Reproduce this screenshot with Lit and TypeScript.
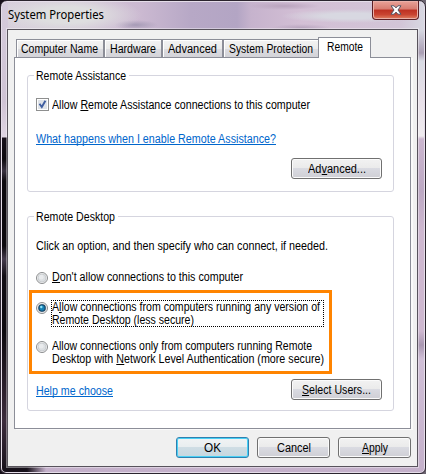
import { LitElement, html, css, svg } from "lit";
import { customElement, property } from "lit/decorators.js";

/** A single line of text fitted to a given width. "&" marks the access key. */
@customElement("fit-text")
class FitText extends LitElement {
  @property() text = "";
  @property({ type: Number }) w = 0;
  static styles = css`
    :host { display: block; flex: none; height: 14px; line-height: 14px; white-space: nowrap; }
    .line { display: inline-block; transform-origin: 0 0; }
    .key { display: inline-block; height: 13px; vertical-align: top; border-bottom: 1px solid currentColor; line-height: 14px; box-sizing: border-box; }
  `;
  updated() {
    const el = this.renderRoot.querySelector(".line") as HTMLElement;
    this.style.width = this.w + "px";
    const n = el.getBoundingClientRect().width;
    if (n) el.style.transform = `scaleX(${this.w / n})`;
  }
  render() {
    const i = this.text.indexOf("&");
    return i < 0
      ? html`<span class="line">${this.text}</span>`
      : html`<span class="line">${this.text.slice(0, i)}<span class="key">${this.text[i + 1]}</span>${this.text.slice(i + 2)}</span>`;
  }
}

const t = (text: string, w: number, cls = "") => html`<fit-text class=${cls} .text=${text} .w=${w}></fit-text>`;

const radio = (on: boolean) => html`<svg class="radio" viewBox="0 0 12 12">
  <circle cx="6" cy="6" r="5.5" fill="#f6f6f6" stroke="#8a8c8e"/>
  <circle cx="6" cy="6" r="4" fill="#dcdfe2" stroke="#c4c8cc" stroke-width=".8"/>
  ${on
    ? svg`<circle cx="6" cy="6" r="3.2" fill="#1580b4" stroke="#123e60" stroke-width="1.1"/><circle cx="5.3" cy="5" r="1.2" fill="#8fe2f8"/>`
    : svg`<circle cx="5.2" cy="5.2" r="2.4" fill="#e9ebed"/>`}
</svg>`;

@customElement("app-root")
class AppRoot extends LitElement {
  static styles = css`
    :host { display: block; width: 426px; height: 474px; background: linear-gradient(90deg, #17101a 60%, #6d6672); overflow: hidden; font: 12px "Liberation Sans", sans-serif; color: #000; }
    * { box-sizing: border-box; }
    .window { position: relative; height: 474px; border: 1px solid #2b242e; border-radius: 7px 7px 6px 6px; padding: 28px 7px 7px 6px; box-shadow: inset 0 0 0 1px #e5dde9;
      background:
        linear-gradient(90deg, #17101a 25px, transparent 44px) 1px 465px / 60px 7px no-repeat,
        linear-gradient(#d5cbdc 0, #cfc3d4 100px, #dfd5e2 136px, #17101a 137px, #0d090e 158px, #3a3240 170px, #0d090e 180px, #0d090e 245px, #453b4c 258px, #120d14 275px, #0d090e 330px, #3c2c3c 420px, #17101a 470px) 1px 0 / 6px 471px no-repeat,
        radial-gradient(ellipse 75px 20px at 66px 14px, #dededf 40%, transparent) 0 0 / 160px 28px no-repeat,
        radial-gradient(ellipse 22px 5px at 135px 24px, #a69bb6, transparent) 0 0 / 200px 29px no-repeat,
        radial-gradient(ellipse 36px 4px at 283px 5px, #b9a3bd, transparent) 0 0 / 426px 29px no-repeat,
        radial-gradient(ellipse 30px 4px at 300px 27px, #b7a4be, transparent) 0 0 / 426px 29px no-repeat,
        radial-gradient(ellipse 70px 7px at 350px 15px, #d8d8e1 40%, transparent) 0 0 / 426px 29px no-repeat,
        linear-gradient(90deg, #d8d0dc 0, #d3c3d8 80px, #cbb9d1 140px, #b7a8c6 190px, #b3a5c4 236px, #c6b3cd 250px, #d3bfd5 300px, #d2c5d7 400px, #d8dae3 426px) 0 0 / 426px 29px no-repeat,
        linear-gradient(#d8dae3 28px, #a99db3 52px, #d8dae3 60px, #e8e0e9 100px, #efebef 135px, #cbb6cf 138px, #bda9c4 190px, #ceb8d0 230px, #ceb8d0 330px, #a997b1 344px, #d0bfd7 358px, #c4b0ca 474px); }
    .title { position: absolute; left: 7px; top: 7px; font: 12px/14px "Noto Sans", sans-serif; }
    .close { position: absolute; left: 371px; top: 0; width: 47px; height: 19px; border: 1px solid #5e2025; border-top: 0; border-radius: 0 0 4px 4px; box-shadow: inset 0 0 0 1px #eab0a8; background: linear-gradient(#e9a399, #d77c70 45%, #bd3022 50%, #c94431 75%, #df8164); }
    .close svg { display: block; width: 12px; height: 10px; margin: 4px 0 0 17px; }
    .client { height: 438px; border: 1px solid #58535c; background: #f0f0f0; padding: 7px 0 0 6px; box-shadow: 0 0 0 1px rgba(255, 255, 255, .4); }
    .tabs { display: flex; align-items: flex-end; height: 20px; padding-left: 2px; position: relative; }
    .tab { height: 18px; border: 1px solid #8c8e98; border-bottom: 0; padding: 2px 0 0 5px; background: linear-gradient(#f3f3f3, #ebebeb 50%, #dddde1 52%, #d3d3d8); box-shadow: inset 1px 1px 0 #fff; }
    .tab:first-child { padding-left: 4px; }
    .t1 { width: 88px; }
    .t2 { width: 58px; }
    .t3 { width: 61px; }
    .t4 { width: 96px; }
    .active { width: 53px; height: 21px; background: #fff; padding: 2px 0 0 8px; margin: 0 0 -1px -1px; }
    .panel { width: 397px; height: 372px; border: 1px solid #8c8e98; background: #fff; padding: 17px 0 0 12px; box-shadow: 2px 1px 0 #fafafa; }
    .group { width: 367px; border: 1px solid #d5d5df; border-radius: 3px; padding-left: 8px; }
    .g1 { height: 117px; }
    .g2 { height: 195px; margin-top: 24px; }
    .legend { width: max-content; margin: -7px 0 0 -2px; padding: 0 3px 0 2px; background: #fff; }
    .row { display: flex; align-items: flex-start; }
    .check { margin-top: 15px; gap: 3px; }
    .box { width: 13px; height: 13px; border: 1px solid #8e8f8f; background: #fff; padding: 1px; }
    .box svg { display: block; width: 9px; height: 9px; background: #dfe3e8; }
    .link { color: #0066cc; border-bottom: 1px solid #0066cc; height: 13px; width: max-content; }
    .button { width: 91px; height: 21px; border: 1px solid #707070; border-radius: 3px; box-shadow: inset 0 0 0 1px #fbfbfb; display: flex; justify-content: center; padding-top: 3px; background: linear-gradient(#f2f2f2, #ebebeb 45%, #dadbe2 48%, #cfcfd5); }
    .l1 { margin-top: 20px; }
    .b1 { margin: 13px 0 0 255px; }
    .intro { margin-top: 15px; }
    .radio { width: 12px; height: 12px; display: block; flex: none; margin: 2px 4px 0 0; }
    .r1 { margin-top: 17px; }
    .highlight { width: 303px; height: 84px; border: 3px solid #ff8400; margin: 6px 0 0 -7px; padding: 7px 0 0 4px; }
    .focus { outline: 1px dotted #000; outline-offset: -1px; width: 273px; height: 27px; margin-left: -1px; padding-left: 1px; }
    .focus fit-text, .pair fit-text { height: 13px; }
    .r3 { margin-top: 12px; }
    .foot { margin-top: 5px; }
    .foot .link { margin-top: 5px; margin-right: 178px; }
    .actions { display: flex; gap: 8px; padding: 8px 0 0 162px; }
    .actions .button { width: 73px; }
    .actions .ok { border-color: #2f80b0; box-shadow: inset 0 0 0 1px #48d0f5; background: linear-gradient(#f1f3f4, #e9eef0 45%, #cfdde4 48%, #c5d7df); }
  `;
  render() {
    return html`<div class="window">
      ${t("System Properties", 96, "title")}
      <div class="close"><svg viewBox="0 0 12 10"><path d="M1 .8H4.1L6 2.9 7.9.8H11L8 5l3 4.2H7.9L6 7.1 4.1 9.2H1L4 5z" fill="#fff" stroke="#535666" stroke-width="1"/></svg></div>
      <div class="client">
        <div class="tabs">
          <div class="tab t1">${t("Computer Name", 77)}</div>
          <div class="tab t2">${t("Hardware", 46)}</div>
          <div class="tab t3">${t("Advanced", 49)}</div>
          <div class="tab t4">${t("System Protection", 84)}</div>
          <div class="tab active">${t("Remote", 36)}</div>
        </div>
        <div class="panel">
          <div class="group g1">
            <div class="legend">${t("Remote Assistance", 90)}</div>
            <div class="row check"><div class="box"><svg viewBox="0 0 9 9"><path d="M1.5 3.8L3.8 7 7.4.8" fill="none" stroke="#3f5ea0" stroke-width="1.9"/></svg></div>${t("Allow &Remote Assistance connections to this computer", 258)}</div>
            <div class="link l1">${t("What happens when I enable Remote Assistance?", 240)}</div>
            <div class="button b1">${t("Ad&vanced...", 58)}</div>
          </div>
          <div class="group g2">
            <div class="legend">${t("Remote Desktop", 79)}</div>
            <div class="intro">${t("Click an option, and then specify who can connect, if needed.", 292)}</div>
            <div class="row r1">${radio(false)}${t("&Don't allow connections to this computer", 191)}</div>
            <div class="highlight">
              <div class="row r2">${radio(true)}<div class="focus">${t("A&llow connections from computers running any version of", 268)}${t("Remote Desktop (less secure)", 142)}</div></div>
              <div class="row r3">${radio(false)}<div class="pair">${t("Allow connections only from computers running Remote", 260)}${t("Desktop with &Network Level Authentication (more secure)", 272)}</div></div>
            </div>
            <div class="row foot"><div class="link">${t("Help me choose", 77)}</div><div class="button">${t("&Select Users...", 69)}</div></div>
          </div>
        </div>
        <div class="actions"><div class="button ok">${t("OK", 17)}</div><div class="button">${t("Cancel", 34)}</div><div class="button">${t("&Apply", 26)}</div></div>
      </div>
    </div>`;
  }
}
